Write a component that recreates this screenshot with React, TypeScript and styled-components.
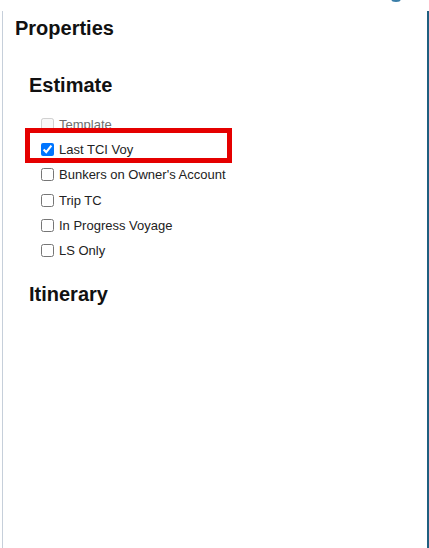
import React from 'react';
import styled, { createGlobalStyle } from 'styled-components';

const GlobalStyle = createGlobalStyle`
  html, body {
    margin: 0;
    padding: 0;
    background: #ffffff;
    font-family: "Liberation Sans", Arial, sans-serif;
  }
`;

const options = [
  { label: 'Template', checked: false, disabled: true },
  { label: 'Last TCI Voy', checked: true, disabled: false },
  { label: "Bunkers on Owner's Account", checked: false, disabled: false },
  { label: 'Trip TC', checked: false, disabled: false },
  { label: 'In Progress Voyage', checked: false, disabled: false },
  { label: 'LS Only', checked: false, disabled: false },
];

const App = () => {
  return (
    <Page>
      <GlobalStyle />
      <TopIcon viewBox="0 0 12 4" aria-hidden="true">
        <ellipse cx="6" cy="0" rx="6" ry="2.5" fill="#3a7ea8" />
      </TopIcon>
      <Panel>
        <Title>Properties</Title>
        <Section>
          <SectionTitle>Estimate</SectionTitle>
          <OptionList>
            {options.map((o) => (
              <Option key={o.label} faded={o.disabled}>
                <Check
                  type="checkbox"
                  defaultChecked={o.checked}
                  disabled={o.disabled}
                />
                {o.label}
                {o.checked && <Highlight />}
              </Option>
            ))}
          </OptionList>
        </Section>
        <Section>
          <SectionTitle>Itinerary</SectionTitle>
        </Section>
      </Panel>
    </Page>
  );
};

export default App;

const Page = styled.div`
  position: relative;
  width: 429px;
  height: 548px;
  overflow: hidden;
`;

const TopIcon = styled.svg`
  position: absolute;
  left: 390px;
  top: 0;
  width: 12px;
  height: 3px;
`;

const Panel = styled.div`
  box-sizing: border-box;
  margin: 11px 0 0 2px;
  width: 427px;
  height: 537px;
  border-left: 1px solid #c6cfda;
  border-right: 2px solid #1f5f80;
  padding: 5px 0 0 12px;
`;

const Title = styled.div`
  font-size: 20px;
  line-height: 24px;
  font-weight: 700;
  color: #111;
`;

const Section = styled.div`
  padding-left: 14px;
  margin-top: 33px;

  & + & {
    margin-top: 19px;
  }
`;

const SectionTitle = styled.div`
  font-size: 20px;
  line-height: 24px;
  font-weight: 700;
  color: #111;
`;

const OptionList = styled.div`
  display: flex;
  flex-direction: column;
  margin-top: 15px;
  padding-left: 12px;
`;

const Option = styled.label<{ faded?: boolean }>`
  position: relative;
  display: flex;
  align-items: center;
  height: 25.2px;
  font-size: 13px;
  color: ${({ faded }) => (faded ? '#6e6e6e' : '#222')};
`;

const Check = styled.input`
  width: 13px;
  height: 13px;
  margin: 0 5px 0 0;
`;

const Highlight = styled.span`
  position: absolute;
  left: -16px;
  top: -9px;
  width: 207px;
  height: 35px;
  box-sizing: border-box;
  border: 5px solid #e50000;
  pointer-events: none;
`;
